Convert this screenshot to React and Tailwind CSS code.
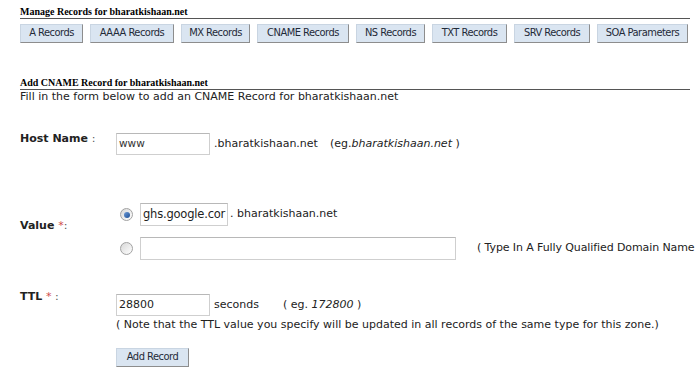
import React from 'react'

const tabs = [
  { label: 'A Records', w: 'w-[63px]' },
  { label: 'AAAA Records', w: 'w-[84px]' },
  { label: 'MX Records', w: 'w-[69px]' },
  { label: 'CNAME Records', w: 'w-[92px]' },
  { label: 'NS Records', w: 'w-[69px]' },
  { label: 'TXT Records', w: 'w-[75px]' },
  { label: 'SRV Records', w: 'w-[76px]' },
  { label: 'SOA Parameters', w: 'w-[91px]' },
]

const Radio = ({ checked }) => (
  <span className="flex shrink-0 items-center justify-center w-[13px] h-[13px] rounded-full border border-[#a2a2a2] bg-gradient-to-br from-[#d8d8d8] to-[#ffffff]">
    {checked && <span className="w-[6px] h-[6px] rounded-full bg-gradient-to-br from-[#6c9ad6] to-[#1d4f96]" />}
  </span>
)

const SectionTitle = ({ children }) => (
  <div className="border-b border-[#555] text-[10px] leading-[12px] font-bold text-black font-['Liberation_Serif',serif]">
    {children}
  </div>
)

export default function App() {
  return (
    <div className="w-[700px] h-[374px] bg-white overflow-hidden px-[20px] pr-[10px] font-['DejaVu_Sans',Verdana,sans-serif] text-[11px] text-[#222]">
      <div className="pt-[6px]">
        <SectionTitle>Manage Records for bharatkishaan.net</SectionTitle>
        <div className="flex gap-[7px] mt-[5px]">
          {tabs.map(t => (
            <div
              key={t.label}
              className={`${t.w} h-[19px] flex items-center justify-center bg-[#dae5f1] border border-[#c9d5e2] border-r-[#8d8d8d] border-b-[#8d8d8d] text-[11px] tracking-[-0.5px] text-[#1f2a38] font-['DejaVu_Sans_Condensed','DejaVu_Sans',sans-serif] whitespace-nowrap`}
            >
              {t.label}
            </div>
          ))}
        </div>
      </div>

      <div className="mt-[34px]">
        <SectionTitle>Add CNAME Record for bharatkishaan.net</SectionTitle>
        <div className="text-[11px] leading-[13px] text-[#222]">Fill in the form below to add an CNAME Record for bharatkishaan.net</div>
      </div>

      <div className="flex mt-[30px]">
        <div className="w-[96px] shrink-0 font-bold text-[11px] leading-[12px]">
          Host Name <span className="font-normal text-[#555]">:</span>
        </div>
        <div className="flex items-center">
          <div className="w-[94px] h-[22px] border border-[#cfcfcf] border-t-[#b8b8b8] flex items-center px-[2px] text-[10.5px] text-[#333]">www</div>
          <span className="ml-[4px] w-[116px]">.bharatkishaan.net</span>
          <span>(eg.<i>bharatkishaan.net</i> )</span>
        </div>
      </div>

      <div className="flex items-center mt-[48px]">
        <div className="w-[96px] shrink-0 font-bold text-[11px] pt-[1px] mb-[12px]">
          Value <span className="font-normal text-[#d04a4a]">*</span><span className="font-normal text-[#555]">:</span>
        </div>
        <div className="flex flex-col gap-[11px] pl-[4px]">
          <div className="flex items-center">
            <Radio checked />
            <div className="ml-[7px] shrink-0 w-[88px] h-[23px] border border-[#cfcfcf] border-t-[#b8b8b8] flex items-center px-[2px] text-[11.5px] tracking-[-0.2px] text-[#222] overflow-hidden whitespace-nowrap">ghs.google.cor</div>
            <span className="ml-[2px] whitespace-nowrap">. bharatkishaan.net</span>
          </div>
          <div className="flex items-center">
            <Radio />
            <div className="ml-[7px] shrink-0 w-[316px] h-[23px] border border-[#cfcfcf] border-t-[#b8b8b8]" />
            <span className="ml-[21px] whitespace-nowrap tracking-[-0.1px]">( Type In A Fully Qualified Domain Name</span>
          </div>
        </div>
      </div>

      <div className="flex mt-[30px]">
        <div className="w-[96px] shrink-0 font-bold text-[11px] leading-[12px] pt-[1px]">
          TTL <span className="font-normal text-[#d04a4a]">*</span><span className="font-normal text-[#555]"> :</span>
        </div>
        <div className="flex flex-col pt-[4px]">
          <div className="flex items-center">
            <div className="w-[94px] h-[22px] border border-[#cfcfcf] border-t-[#b8b8b8] flex items-center px-[2px] text-[11px] text-[#222]">28800</div>
            <span className="ml-[4px] w-[69px]">seconds</span>
            <span>( eg. <i>172800</i> )</span>
          </div>
          <div className="leading-[14px] mt-[2px] whitespace-nowrap">( Note that the TTL value you specify will be updated in all records of the same type for this zone.)</div>
          <div className="mt-[16px]">
            <div className="w-[73px] h-[19px] flex items-center justify-center bg-[#dae5f1] border border-[#c9d5e2] border-r-[#8d8d8d] border-b-[#8d8d8d] text-[11px] tracking-[-0.5px] text-[#1f2a38] font-['DejaVu_Sans_Condensed','DejaVu_Sans',sans-serif] whitespace-nowrap">
              Add Record
            </div>
          </div>
        </div>
      </div>
    </div>
  )
}
